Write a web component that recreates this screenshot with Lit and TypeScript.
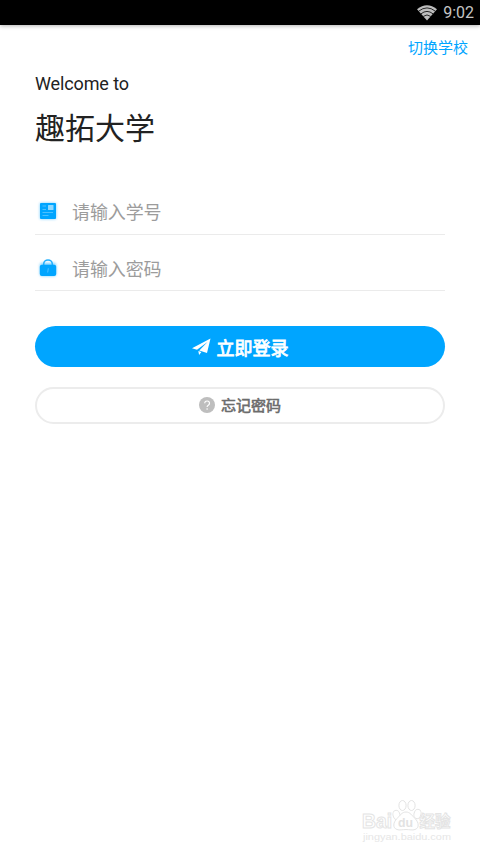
import { LitElement, html, svg, css } from "lit";
import { customElement } from "lit/decorators.js";

@customElement("app-root")
export class AppRoot extends LitElement {
  static styles = css`
    :host {
      display: block;
      box-sizing: border-box;
      position: relative;
      height: 854px;
      background: #fff;
      overflow: hidden;
      font-family: Roboto, "Noto Sans CJK SC", sans-serif;
      color: #222;
    }
    * { box-sizing: border-box; }
    svg { display: block; flex: none; }
    .status {
      display: flex;
      align-items: center;
      justify-content: flex-end;
      gap: 6px;
      height: 25px;
      padding-right: 6px;
      background: #000;
      color: #c4c4c4;
      font-size: 16px;
      line-height: 25px;
      box-shadow: 0 1px 4px rgba(0, 0, 0, 0.3);
    }
    .top {
      display: flex;
      justify-content: flex-end;
      height: 46px;
      padding: 12px 12px 0;
      font-size: 15px;
      line-height: 22px;
      color: #00a5ff;
    }
    .main { padding: 0 35px; }
    .welcome { font-size: 18px; line-height: 26px; letter-spacing: -0.12px; }
    .school {
      margin: 7px 0 0;
      font-size: 30px;
      line-height: 50px;
      font-weight: 400;
    }
    .fields { margin-top: 35px; }
    .field {
      display: flex;
      align-items: center;
      height: 56px;
      border-bottom: 1px solid #ebebeb;
      font-size: 18px;
      line-height: 24px;
      letter-spacing: -0.1px;
      color: #9c9c9c;
    }
    .field.first { height: 46px; }
    .field.second { padding-top: 12px; }
    .field svg { margin: 0 11px 2px 0; }
    .field span { padding-top: 2px; }
    button {
      display: flex;
      align-items: center;
      justify-content: center;
      width: 100%;
      padding: 0;
      font-family: inherit;
      font-weight: 400;
    }
    .login {
      height: 41px;
      margin-top: 35px;
      border: 0;
      border-radius: 21px;
      background: #00a5ff;
      color: #fff;
      font-size: 18px;
      gap: 6px;
      -webkit-text-stroke: 0.8px #fff;
    }
    .forgot {
      height: 37px;
      margin-top: 20px;
      padding-bottom: 1px;
      border: 2px solid #ececec;
      border-radius: 19px;
      background: #fff;
      color: #6c6c6c;
      font-size: 15px;
      gap: 6px;
      -webkit-text-stroke: 0.6px #6c6c6c;
    }
    .forgot span { padding-bottom: 2px; }
    .mark {
      position: absolute;
      left: 358px;
      top: 796px;
    }
    .mark text { font-family: "Liberation Sans", "Noto Sans CJK SC", sans-serif; font-weight: 700; }
    .mark .site { font-weight: 400; }
  `;

  private wifi = svg`<svg width="20" height="16" viewBox="0 0 20 16">
    <path d="M10 15.500 0 4.200Q10-3.600 20 4.200Z" fill="#bdbdbd"/>
    <g fill="none" stroke="#000" stroke-width=".8">
      <path d="M1.600 6.200Q10-.4 18.400 6.200"/><path d="M4 8.800Q10 4 16 8.800"/><path d="M6.300 11.400Q10 8.500 13.700 11.400"/>
    </g>
  </svg>`;

  private card = svg`<svg width="26" height="26" viewBox="0 0 26 26">
    <defs><filter id="g" x="-30%" y="-30%" width="160%" height="160%"><feGaussianBlur stdDeviation="1.600"/></filter></defs>
    <rect x="5" y="5" width="16" height="16" rx="1" fill="#00a5ff" opacity=".55" filter="url(#g)"/>
    <rect x="5" y="5" width="16" height="16" rx="1" fill="#00a5ff"/>
    <rect x="13" y="7" width="5.500" height="5" rx=".5" fill="#8ed8ff"/>
    <path d="M7.500 8h3.500M7.500 11.500h3.500M7.500 14.500h10.500M7.500 17.500h6" stroke="#4cc0ff" stroke-width="1" fill="none"/>
  </svg>`;

  private bag = svg`<svg width="26" height="26" viewBox="0 0 26 26">
    <defs><filter id="b" x="-30%" y="-30%" width="160%" height="160%"><feGaussianBlur stdDeviation="1.500"/></filter></defs>
    <rect x="5" y="8" width="16" height="13" rx="2" fill="#00a5ff" opacity=".55" filter="url(#b)"/>
    <path d="M8.700 10.500V9a4.300 4.100 0 0 1 8.600 0v1.500" fill="none" stroke="#20b0ff" stroke-width="1.500"/>
    <rect x="4.800" y="9.700" width="16.400" height="11.300" rx="2" fill="#00a5ff"/>
    <path d="M13.300 13.300 12.700 17.500" stroke="#50c0ff" stroke-width="1" fill="none"/>
  </svg>`;

  private plane = svg`<svg width="19" height="18" viewBox="0 0 19 18">
    <path d="M18.500.5 0 10.200l5 1.500L15.500 4 7.300 12.400l7.700 2.500ZM6.300 13l.8 4 2.300-3Z" fill="#fff"/>
  </svg>`;

  private help = svg`<svg width="16" height="16" viewBox="0 0 16 16">
    <circle cx="8" cy="8" r="8" fill="#bebebe"/>
    <path d="M5.700 6.300a2.400 2.300 0 1 1 3.600 2C8.400 8.800 8.100 9.100 8.100 10" fill="none" stroke="#fff" stroke-width="1.200"/>
    <circle cx="8.100" cy="12" r=".8" fill="#fff"/>
  </svg>`;

  private mark = svg`<svg width="100" height="50" viewBox="0 0 100 50">
    <g fill="#fff" stroke="#e4e4e4" stroke-width="1">
      <text x="4" y="32" font-size="20" textLength="30" lengthAdjust="spacingAndGlyphs">Bai</text>
      <ellipse cx="38.500" cy="19" rx="3.500" ry="4.700" transform="rotate(-15 38.500 19)"/>
      <ellipse cx="44.500" cy="9.500" rx="3.600" ry="5"/>
      <ellipse cx="53.500" cy="9.500" rx="3.600" ry="5"/>
      <ellipse cx="59.500" cy="18" rx="3.500" ry="4.700" transform="rotate(15 59.500 18)"/>
      <path d="M48 16c4 0 6 3.500 9 6.500 4 4 4.500 9.500 0 11-2.500 1-5.500 0-9 0s-6.500 1-9 0c-4.500-1.500-4-7 0-11 3-3 5-6.500 9-6.500Z"/>
      <text x="40" y="30.500" font-size="12" textLength="15" lengthAdjust="spacingAndGlyphs" fill="#e2e2e2" stroke="none">du</text>
      <text x="61.500" y="31" font-size="15.500" textLength="31">经验</text>
    </g>
    <text class="site" x="5" y="43.500" font-size="9.500" textLength="88" lengthAdjust="spacingAndGlyphs" fill="#e6e6e6">jingyan.baidu.com</text>
  </svg>`;

  render() {
    return html`
      <div class="status">${this.wifi}<span>9:02</span></div>
      <div class="top"><span>切换学校</span></div>
      <div class="main">
        <div class="welcome">Welcome to</div>
        <h1 class="school">趣拓大学</h1>
        <div class="fields">
          <div class="field first">${this.card}<span>请输入学号</span></div>
          <div class="field second">${this.bag}<span>请输入密码</span></div>
        </div>
        <button class="login">${this.plane}<span>立即登录</span></button>
        <button class="forgot">${this.help}<span>忘记密码</span></button>
      </div>
      <div class="mark">${this.mark}</div>
    `;
  }
}
